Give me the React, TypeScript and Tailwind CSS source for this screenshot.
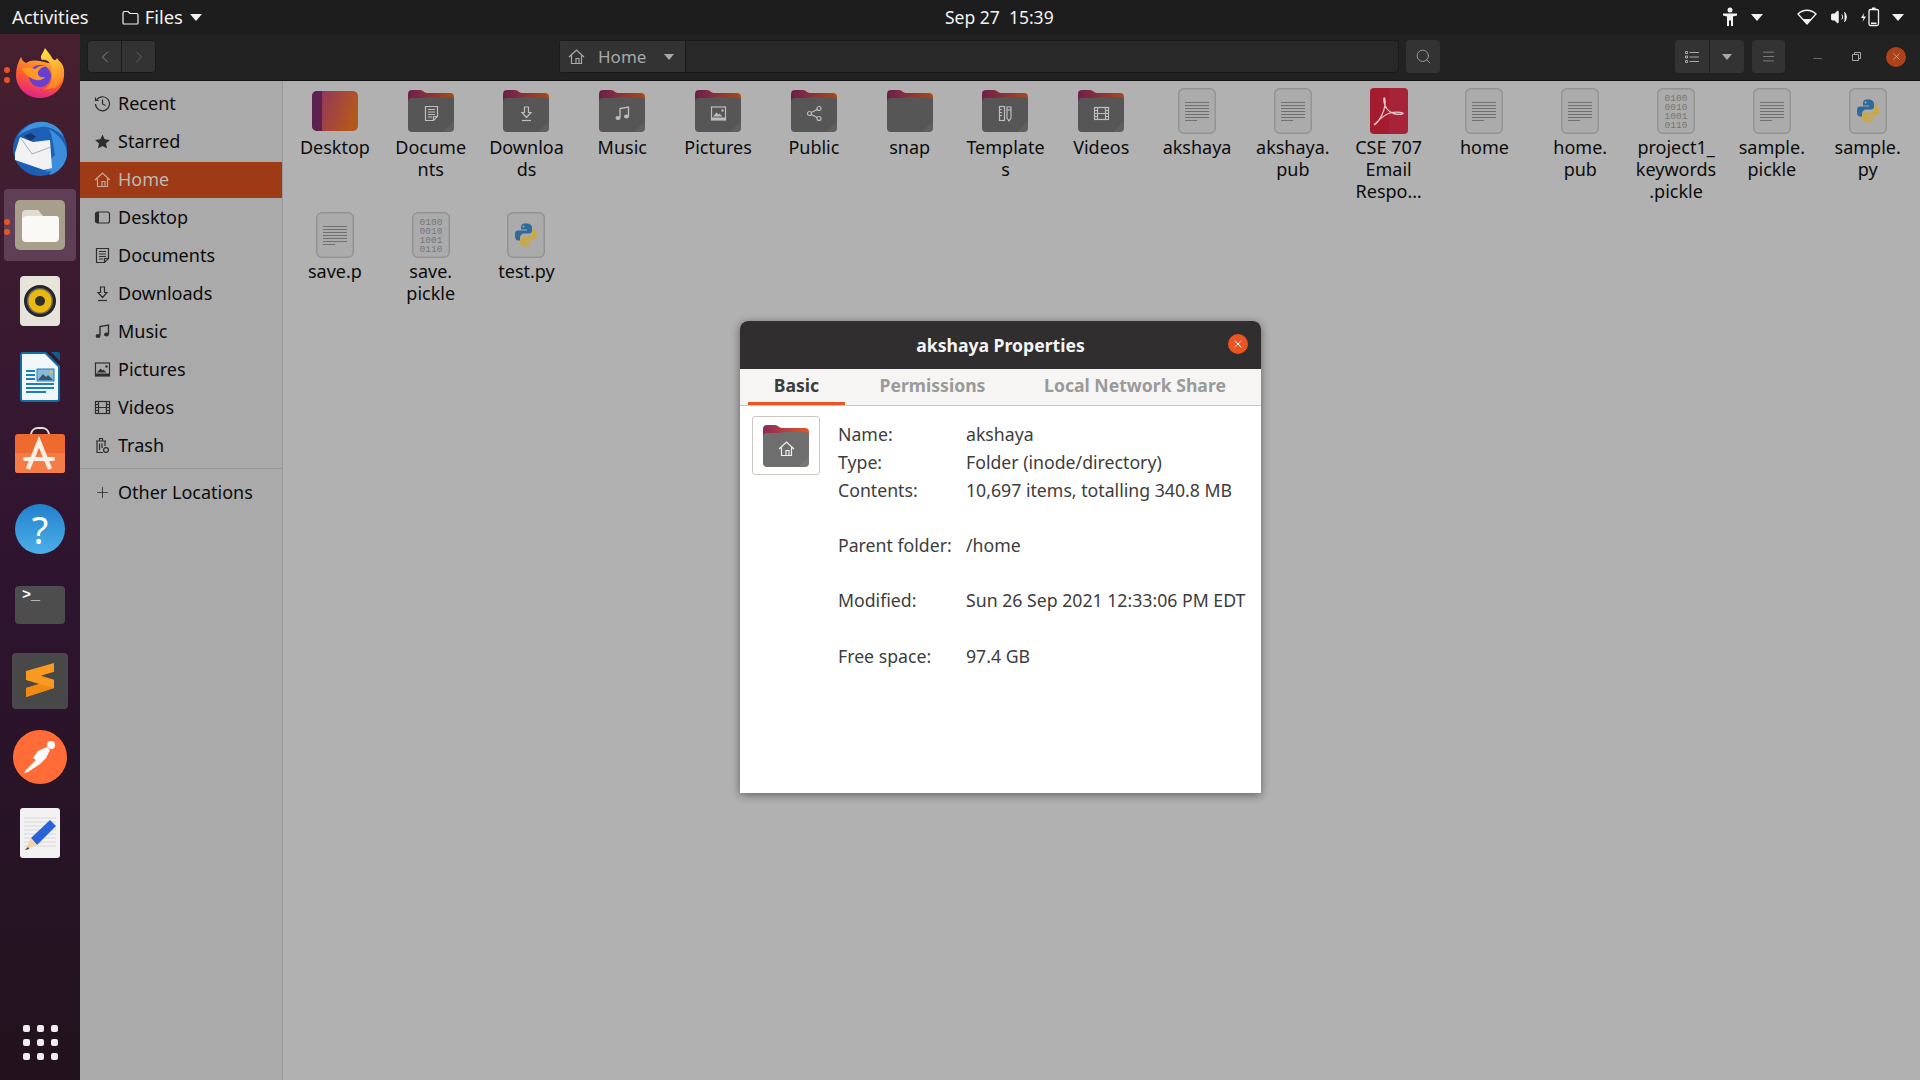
import React from "react";
import { ChevronLeft, ChevronRight, Search, Menu, X, Volume2, Minus, Plus } from "lucide-react";

const sidebarItems = [
  { icon: "recent", label: "Recent" },
  { icon: "star", label: "Starred" },
  { icon: "home", label: "Home", active: true },
  { icon: "desktop", label: "Desktop" },
  { icon: "document", label: "Documents" },
  { icon: "download", label: "Downloads" },
  { icon: "music", label: "Music" },
  { icon: "pictures", label: "Pictures" },
  { icon: "videos", label: "Videos" },
  { icon: "trash", label: "Trash" },
];

const files = [
  { kind: "desktop", lines: ["Desktop"] },
  { kind: "folder", glyph: "document", lines: ["Docume", "nts"] },
  { kind: "folder", glyph: "download", lines: ["Downloa", "ds"] },
  { kind: "folder", glyph: "music", lines: ["Music"] },
  { kind: "folder", glyph: "pictures", lines: ["Pictures"] },
  { kind: "folder", glyph: "share", lines: ["Public"] },
  { kind: "folder", glyph: "", lines: ["snap"] },
  { kind: "folder", glyph: "templates", lines: ["Template", "s"] },
  { kind: "folder", glyph: "videos", lines: ["Videos"] },
  { kind: "text", lines: ["akshaya"] },
  { kind: "text", lines: ["akshaya.", "pub"] },
  { kind: "pdf", lines: ["CSE 707", "Email", "Respo…"] },
  { kind: "text", lines: ["home"] },
  { kind: "text", lines: ["home.", "pub"] },
  { kind: "binary", lines: ["project1_", "keywords", ".pickle"] },
  { kind: "text", lines: ["sample.", "pickle"] },
  { kind: "python", lines: ["sample.", "py"] },
  { kind: "text", lines: ["save.p"] },
  { kind: "binary", lines: ["save.", "pickle"] },
  { kind: "python", lines: ["test.py"] },
];

function Glyph({ name, color = "#2e2e2e" }: { name: string; color?: string }) {
  const s = { fill: "none", stroke: color, strokeWidth: 1.2 };
  switch (name) {
    case "recent":
      return (
        <g {...s}>
          <path d="M2.6 5A7 7 0 1 1 1.5 9" />
          <path d="M1.5 2.5V5.5H4.5M8.5 4.5V9L11.5 10.5" />
        </g>
      );
    case "star":
      return <path d="M8.5 1.5l2.2 4.8 5.2.6-3.9 3.5 1.1 5.1-4.6-2.6-4.6 2.6 1.1-5.1L1.1 6.9l5.2-.6z" fill={color} />;
    case "home":
      return (
        <g {...s}>
          <path d="M1 9L8.5 2L16 9M3.5 7.5V15.5H13.5V7.5M8 15.5V10.5H11V15.5" />
        </g>
      );
    case "desktop":
      return (
        <g>
          <rect x="1.5" y="3" width="14" height="11" rx="2" {...s} />
          <path d="M1.5 5a2 2 0 0 1 2-2H5v11H3.5a2 2 0 0 1-2-2z" fill={color} />
        </g>
      );
    case "document":
      return (
        <g {...s}>
          <path d="M2.5 1.5H14.5V11.5L10.5 15.5H2.5Z" />
          <path d="M5 4.5H12M5 7H12M5 9.5H12M5 12H9M10.5 15.5V11.5H14.5" />
        </g>
      );
    case "download":
      return (
        <g {...s}>
          <path d="M6.5 2H10.5V7.5H13L8.5 12.5L4 7.5H6.5Z" />
          <path d="M4 15.5H13" />
        </g>
      );
    case "music":
      return (
        <g>
          <path d="M6 12.5V3.5L14.5 2V11" fill="none" stroke={color} strokeWidth="1.4" />
          <ellipse cx="4" cy="13" rx="2.5" ry="2" fill={color} />
          <ellipse cx="12.5" cy="11.5" rx="2.5" ry="2" fill={color} />
        </g>
      );
    case "pictures":
      return (
        <g>
          <rect x="1.5" y="2" width="14" height="13" fill="none" stroke={color} strokeWidth="1.2" />
          <path d="M1.5 12.5h14V15h-14zM3 11.5l3.5-4 2 2 1-1 3 3z" fill={color} />
          <circle cx="12.5" cy="5.5" r="1.2" fill={color} />
        </g>
      );
    case "videos":
      return (
        <g {...s}>
          <rect x="1.5" y="2.5" width="14" height="12" />
          <path d="M4.5 2.5V14.5M12.5 2.5V14.5M1.5 5.5H4.5M1.5 8.5H4.5M1.5 11.5H4.5M12.5 5.5H15.5M12.5 8.5H15.5M12.5 11.5H15.5M4.5 8.5H12.5" />
        </g>
      );
    case "trash":
      return (
        <g {...s}>
          <path d="M2 4H12M5.5 4V1.5H8.5V4M3 4V15.5H9M11 4V9M5.5 6.5V13M8 6.5V11" />
          <circle cx="12" cy="13" r="2.4" />
        </g>
      );
    case "share":
      return (
        <g {...s}>
          <circle cx="3.5" cy="8.5" r="2" />
          <circle cx="13" cy="3.5" r="2" />
          <circle cx="13" cy="13.5" r="2" />
          <path d="M5.3 7.5L11.2 4.5M5.3 9.5L11.2 12.5" />
        </g>
      );
    case "templates":
      return (
        <g {...s}>
          <rect x="2.5" y="1.5" width="5" height="14" />
          <path d="M2.5 4.5H5M2.5 7.5H5M2.5 10.5H5M10 2H14V13L12 16L10 13Z" />
          <path d="M10 5H14" />
        </g>
      );
    default:
      return null;
  }
}

function FolderIcon({ glyph, dim = true }: { glyph: string; dim?: boolean }) {
  const id = dim ? "folderDim" : "folderBright";
  const from = dim ? "#6d1f4c" : "#8a2a5e";
  const to = dim ? "#a84a1c" : "#e95420";
  const front = dim ? "#565656" : "#6e6e6e";
  return (
    <svg width="46" height="42" viewBox="0 0 46 42">
      <defs>
        <linearGradient id={id} x1="0" x2="1" y1="0" y2="0">
          <stop offset="0" stopColor={from} />
          <stop offset="1" stopColor={to} />
        </linearGradient>
      </defs>
      <path d="M0 20V4a4 4 0 0 1 4-4h8c3 0 4 3 7 3h23a4 4 0 0 1 4 4v13z" fill={`url(#${id})`} />
      <path d="M0 12a4 4 0 0 1 4-4h11c3 0 4-1 6-1h21a4 4 0 0 1 4 4v27a4 4 0 0 1-4 4H4a4 4 0 0 1-4-4z" fill={front} />
      <path d="M46 31v7a4 4 0 0 1-4 4h-7z" fill="#ffffff" opacity="0.06" />
      <g transform="translate(15 15)">
        <Glyph name={glyph} color={dim ? "#bdbdbd" : "#efefef"} />
      </g>
    </svg>
  );
}

function PageFrame({ children }: { children?: React.ReactNode }) {
  return (
    <svg width="38" height="46" viewBox="0 0 38 46">
      <rect x="0.75" y="0.75" width="36.5" height="44.5" rx="5" fill="#ababab" stroke="#939393" strokeWidth="1.5" />
      {children}
    </svg>
  );
}

function TextFileIcon() {
  return (
    <PageFrame>
      <path
        d="M7 14.5H31M7 17.5H31M7 20.5H31M7 23.5H31M7 26.5H31M7 29.5H31M7 32.5H19"
        stroke="#707070"
        strokeWidth="1"
      />
    </PageFrame>
  );
}

function BinaryFileIcon() {
  return (
    <PageFrame>
      <g fontFamily="Liberation Mono, monospace" fontSize="9.5" fill="#777777" textAnchor="middle">
        <text x="19" y="13">0100</text>
        <text x="19" y="22">0010</text>
        <text x="19" y="31">1001</text>
        <text x="19" y="40">0110</text>
      </g>
    </PageFrame>
  );
}

function PythonIcon() {
  return (
    <PageFrame>
      <g transform="translate(8 11.5)">
        <path d="M11 0C6 0 6 2 6 5v1h6v1H3C0 7 0 10 0 12s.5 5 3 5h2v-3c0-2 2-4 4-4h5c2 0 3-1 3-3V4c0-2-2-4-6-4z" fill="#2f6a9c" />
        <circle cx="8.5" cy="3" r="1" fill="#ababab" />
        <path d="M11 23c5 0 5-2 5-5v-1h-6v-1h9c3 0 3-3 3-5s-.5-5-3-5h-2v3c0 2-2 4-4 4H8c-2 0-3 1-3 3v3c0 2 2 4 6 4z" fill="#c7a94c" />
        <circle cx="13.5" cy="20" r="1" fill="#ababab" />
      </g>
    </PageFrame>
  );
}

function PdfIcon() {
  return (
    <svg width="38" height="46" viewBox="0 0 38 46">
      <rect width="38" height="46" rx="4" fill="#a41c30" />
      <rect x="19" width="19" height="46" rx="4" fill="#ffffff" opacity="0.04" />
      <path
        d="M4 37c5-3 10-12 11-20 .5-5-.5-8-1-7s-.5 6 3 11 11 6 15 5-5-3-12-1-12 8-16 12z"
        fill="none"
        stroke="#e9c4c9"
        strokeWidth="1.3"
      />
    </svg>
  );
}

function DesktopFolderIcon() {
  return (
    <svg width="46" height="40" viewBox="0 0 46 40">
      <defs>
        <linearGradient id="deskGrad" x1="0" x2="1" y1="0" y2="0.3">
          <stop offset="0" stopColor="#8b3168" />
          <stop offset="1" stopColor="#b4561f" />
        </linearGradient>
      </defs>
      <rect width="46" height="40" rx="5" fill="url(#deskGrad)" />
      <path d="M5 0h5v40H5a5 5 0 0 1-5-5V5a5 5 0 0 1 5-5z" fill="#5a2150" />
    </svg>
  );
}

function FileItem({ file }: { file: (typeof files)[number] }) {
  return (
    <div className="flex flex-col items-center">
      <div className="flex h-[46px] w-[46px] items-center justify-center">
        {file.kind === "folder" && <FolderIcon glyph={file.glyph ?? ""} />}
        {file.kind === "desktop" && <DesktopFolderIcon />}
        {file.kind === "text" && <TextFileIcon />}
        {file.kind === "binary" && <BinaryFileIcon />}
        {file.kind === "python" && <PythonIcon />}
        {file.kind === "pdf" && <PdfIcon />}
      </div>
      <div className="mt-[2px] text-center text-[18px] leading-[22px] text-[#0c0c0c]">
        {file.lines.map((line) => (
          <div key={line}>{line}</div>
        ))}
      </div>
    </div>
  );
}

function DockItem({ children, dots, active }: { children: React.ReactNode; dots?: boolean; active?: boolean }) {
  return (
    <div className="relative flex h-[76px] w-[80px] items-center justify-center">
      {active && <div className="absolute left-[4px] top-[2px] h-[72px] w-[72px] rounded-[4px] bg-[#5f3f55]" />}
      {dots && (
        <div className="absolute left-[4px] top-[32px] flex flex-col gap-[4px]">
          <div className="h-[6px] w-[6px] rounded-full bg-[#e95420]" />
          <div className="h-[6px] w-[6px] rounded-full bg-[#e95420]" />
        </div>
      )}
      <div className="relative flex">{children}</div>
    </div>
  );
}

function Dock() {
  return (
    <aside className="flex w-[80px] shrink-0 flex-col bg-linear-to-b from-[#47202f] via-[#2f1430] to-[#21121d] pt-px">
      <DockItem dots>
        <svg width="50" height="50" viewBox="0 0 50 50">
          <defs>
            <linearGradient id="ffBody" x1="0.7" x2="0.35" y1="0" y2="1">
              <stop offset="0" stopColor="#ffb52e" />
              <stop offset="0.55" stopColor="#ff5a2e" />
              <stop offset="1" stopColor="#e0208c" />
            </linearGradient>
            <linearGradient id="ffFlame" x1="0.4" x2="0.7" y1="0" y2="1">
              <stop offset="0" stopColor="#ffe14a" />
              <stop offset="1" stopColor="#ff7a1f" />
            </linearGradient>
          </defs>
          <path d="M1 27C1 20 3 14 6 9c1 3 2 5 5 6 4-3 9-3 14-2 8 2 24 4 24 14 0 13-11 23-24 23S1 40 1 27z" fill="url(#ffBody)" />
          <path d="M30 0c-2 6-6 8-3 12 8-2 11 8 10 16 0 10-7 14-13 14l16-2c6-5 10-10 9-18-1-8-5-8-7-12-2 4-4 2-6-2-2-3-4-5-6-8z" fill="url(#ffFlame)" />
          <circle cx="25" cy="28" r="11" fill="#6a3fd0" />
          <path d="M7 21c5-2 9-1 13 0 3-3 8-4 11-3-4 1-7 3-8 6-1 4 3 6 7 5-3 4-9 4-14 1-4-2-7-5-9-9z" fill="#ff9a26" />
        </svg>
      </DockItem>
      <DockItem>
        <svg width="56" height="56" viewBox="0 0 56 56">
          <circle cx="28" cy="28" r="27" fill="#1c5fb4" />
          <path d="M5 16C12 6 22-1 32 1c10 1 17 7 20 15-7-7-15-11-23-10C20 7 12 10 5 16z" fill="#3f93dd" />
          <path d="M37 8c11 6 18 16 18 26-1 8-6 15-14 19l-4 1 2-4-6 1 3-3-5-2 12-12c-2-9-2-18-6-26z" fill="#3a8edb" />
          <path d="M12 15l7-3 5 4-6 4z" fill="#16386d" />
          <path d="M3 32L8 16L21 21L38 19L40 47L32 49L3 39Z" fill="#f2f2f4" />
          <path d="M8 16L20 33L39 26" fill="none" stroke="#a6adb8" strokeWidth="1" />
        </svg>
      </DockItem>
      <DockItem dots active>
        <svg width="50" height="50" viewBox="0 0 50 50">
          <rect width="50" height="50" rx="5" fill="#a79f8c" />
          <path d="M7 16a4 4 0 0 1 4-4h10l5 4h15a3 3 0 0 1 3 3v19a4 4 0 0 1-4 4H11a4 4 0 0 1-4-4z" fill="#faf9f6" />
          <path d="M7 18v-4a4 4 0 0 1 4-4h12l5 6H11z" fill="#e0dcd1" />
        </svg>
      </DockItem>
      <DockItem>
        <svg width="40" height="50" viewBox="0 0 40 50">
          <rect width="40" height="50" rx="4" fill="#e6e3da" />
          <circle cx="20" cy="25" r="16" fill="#262626" />
          <circle cx="20" cy="25" r="13" fill="#6d6a60" />
          <circle cx="20" cy="25" r="11.5" fill="#eab910" />
          <circle cx="20" cy="25" r="5" fill="#2e2e2e" />
        </svg>
      </DockItem>
      <DockItem>
        <svg width="40" height="50" viewBox="0 0 40 50">
          <path d="M3 0h23l14 14v33a3 3 0 0 1-3 3H3a3 3 0 0 1-3-3V3a3 3 0 0 1 3-3z" fill="#0f6fa6" />
          <path d="M3 2h22l13 13v32a1 1 0 0 1-1 1H3a1 1 0 0 1-1-1V3a1 1 0 0 1 1-1z" fill="#f2f6f9" />
          <path d="M31 0h7a2 2 0 0 1 2 2v7z" fill="#0f5f8e" />
          <path d="M6 18h9v2H6zM6 22h9v2H6zM6 26h9v2H6zM6 31h28v2H6zM6 35h28v2H6zM6 39h20v2H6z" fill="#1a7fc0" />
          <rect x="17" y="17" width="17" height="12" fill="#8ab8d8" stroke="#1a7fc0" />
          <path d="M18 28l5-6 3 3 2-2 5 5z" fill="#39556b" />
          <circle cx="31" cy="20" r="1.5" fill="#f0c040" />
        </svg>
      </DockItem>
      <DockItem>
        <svg className="-mt-[6px]" width="50" height="46" viewBox="0 0 50 46">
          <path d="M16 9V7a7 7 0 0 1 7-6h4a7 7 0 0 1 7 6v2" fill="none" stroke="#e9dfc9" strokeWidth="2" />
          <rect y="7" width="50" height="39" rx="3" fill="#ef6a2f" />
          <path d="M0 26h50v17a3 3 0 0 1-3 3H3a3 3 0 0 1-3-3z" fill="#f47c47" />
          <path d="M13 42L24 15L35 42" fill="none" stroke="#fdeee6" strokeWidth="4.5" />
          <path d="M10 32H38" fill="none" stroke="#fdeee6" strokeWidth="4" strokeLinecap="round" />
        </svg>
      </DockItem>
      <DockItem>
        <div className="flex h-[50px] w-[50px] items-center justify-center rounded-full bg-linear-to-b from-[#2280cc] to-[#4cb0e8] text-[38px] leading-none text-white">
          ?
        </div>
      </DockItem>
      <DockItem>
        <div className="h-[38px] w-[50px] rounded-[4px] bg-[#4d4d4d] pl-[7px] pt-px font-['Liberation_Mono',monospace] text-[15px] font-bold leading-[17px] text-white">
          {">_"}
        </div>
      </DockItem>
      <DockItem>
        <svg width="56" height="56" viewBox="0 0 56 56">
          <rect width="56" height="56" rx="4" fill="#484848" />
          <path d="M14 18L42 10V18.7L28.7 22.7L42 26.7V35L14 44V35L27.3 31L14 27Z" fill="#f79a1e" />
          <path d="M14 35L27.3 31L42 35L14 44Z" fill="#ef8a12" />
        </svg>
      </DockItem>
      <DockItem>
        <svg width="54" height="54" viewBox="0 0 54 54">
          <circle cx="27" cy="27" r="27" fill="#ff6c37" />
          <circle cx="38" cy="15" r="4" fill="#fff" />
          <path d="M34 17L25 21L20 28L23 30L13 40L11 43L15 42L27 34L33 28L37 20Z" fill="#fff" />
        </svg>
      </DockItem>
      <DockItem>
        <svg width="40" height="50" viewBox="0 0 40 50">
          <rect width="40" height="50" rx="3" fill="#f2f2f2" />
          <path d="M4 10H36M4 14H36M4 18H36M4 22H36M4 26H36M4 30H36M4 34H36M4 38H36" stroke="#d8d8d8" strokeWidth="1" />
          <path d="M11 30L30 12L36 18L17 37Z" fill="#2a62d8" />
          <path d="M11 30L17 37L5 42Z" fill="#f6d3ad" />
          <path d="M8 39L5 42L9 41Z" fill="#333" />
        </svg>
      </DockItem>
      <div className="mt-auto mb-[20px] grid grid-cols-[7px_7px_7px] gap-[7px] self-center">
        {Array.from({ length: 9 }).map((_, i) => (
          <div key={i} className="h-[7px] w-[7px] rounded-[2px] bg-[#eeeeee]" />
        ))}
      </div>
    </aside>
  );
}

function Sidebar() {
  return (
    <nav className="w-[203px] shrink-0 border-r border-[#999999] bg-[#aaaaaa] pt-[5px] text-[18px] text-[#0c0c0c]">
      <div className="flex flex-col gap-[2px] pb-[4px]">
        {sidebarItems.map((item) => (
          <div
            key={item.label}
            className={
              item.active
                ? "flex h-[36px] items-center gap-[7px] bg-[#9e3a16] pb-[2px] pl-[14px] text-[#b9b9b9]"
                : "flex h-[36px] items-center gap-[7px] pb-[2px] pl-[14px]"
            }
          >
            <svg width="17" height="17" viewBox="0 0 17 17">
              <Glyph name={item.icon} color={item.active ? "#c4a79a" : "#2e2e2e"} />
            </svg>
            <span>{item.label}</span>
          </div>
        ))}
      </div>
      <div className="flex h-[50px] items-center gap-[7px] border-t border-[#999999] pb-[2px] pl-[14px]">
        <Plus size={17} strokeWidth={1.2} color="#2e2e2e" />
        <span>Other Locations</span>
      </div>
    </nav>
  );
}

function TopBar() {
  return (
    <header className="relative flex h-[34px] shrink-0 items-center bg-[#1d1d1d] pl-[12px] text-[18.4px] text-[#f2f2f2]">
      <span>Activities</span>
      <svg className="ml-[33px]" width="17" height="15" viewBox="0 0 17 15">
        <path d="M1 3a1.5 1.5 0 0 1 1.5-1.5H6L8 3.5h6.5A1.5 1.5 0 0 1 16 5v8a1 1 0 0 1-1 1H2a1 1 0 0 1-1-1z" fill="none" stroke="#f2f2f2" strokeWidth="1.2" />
      </svg>
      <span className="ml-[6px]">Files</span>
      <div className="ml-[7px] h-0 w-0 border-x-[6px] border-t-[7px] border-x-transparent border-t-[#f2f2f2]" />
      <span className="absolute left-[945px] whitespace-pre text-[17.5px]">{"Sep 27  15:39"}</span>
      <div className="ml-auto flex items-center pr-[16px]">
        <svg width="18" height="20" viewBox="0 0 18 20">
          <circle cx="9" cy="3" r="2.5" fill="#f2f2f2" />
          <path d="M2 6.5H16V8.5L12 9.5V19H10V13.5H8V19H6V9.5L2 8.5Z" fill="#f2f2f2" />
        </svg>
        <div className="ml-[12px] h-0 w-0 border-x-[6px] border-t-[7px] border-x-transparent border-t-[#f2f2f2]" />
        <svg className="ml-[34px]" width="20" height="16" viewBox="0 0 20 16">
          <path d="M1 5C6 0 14 0 19 5L10 15Z" fill="none" stroke="#f2f2f2" strokeWidth="1.3" />
          <path d="M5.5 10H14.5L10 15Z" fill="#f2f2f2" />
        </svg>
        <Volume2 className="ml-[13px]" size={18} color="#f2f2f2" fill="#f2f2f2" strokeWidth={1.2} />
        <svg className="ml-[12px]" width="20" height="20" viewBox="0 0 20 20">
          <path d="M4 6L1 11H3.5L2.5 15L6 9.5H3.5Z" fill="#f2f2f2" />
          <rect x="9" y="2.5" width="9.5" height="16" rx="1.5" fill="none" stroke="#f2f2f2" strokeWidth="1.3" />
          <rect x="12" y="0.5" width="3.5" height="2" fill="#f2f2f2" />
          <rect x="11" y="15.5" width="5.5" height="1.5" fill="#f2f2f2" />
        </svg>
        <div className="ml-[12px] h-0 w-0 border-x-[6px] border-t-[7px] border-x-transparent border-t-[#f2f2f2]" />
      </div>
    </header>
  );
}

function Toolbar() {
  return (
    <div className="flex h-[47px] shrink-0 items-center border-b border-[#111111] bg-[#222222] pb-px pl-[7px] text-[#a8a8a8]">
      <div className="flex h-[33px] w-[69px] rounded-[4px] border border-[#1a1a1a] bg-[#333333]">
        <div className="flex flex-1 items-center justify-center border-r border-[#1a1a1a]">
          <ChevronLeft size={20} strokeWidth={1} color="#9a9a9a" />
        </div>
        <div className="flex flex-1 items-center justify-center">
          <ChevronRight size={20} strokeWidth={1} color="#6a6a6a" />
        </div>
      </div>
      <div className="ml-[403px] flex h-[33px] w-[840px] rounded-[4px] border border-[#1a1a1a] bg-[#282828]">
        <div className="flex w-[126px] items-center border-r border-[#1a1a1a] bg-[#333333] pl-[8px] text-[17px]">
          <svg width="17" height="17" viewBox="0 0 17 17">
            <Glyph name="home" color="#a8a8a8" />
          </svg>
          <span className="ml-[13px]">Home</span>
          <div className="ml-[18px] h-0 w-0 border-x-[5px] border-t-[6px] border-x-transparent border-t-[#a8a8a8]" />
        </div>
      </div>
      <div className="ml-[7px] flex h-[33px] w-[34px] items-center justify-center rounded-[4px] bg-[#333333]">
        <Search size={17} strokeWidth={1.2} color="#a8a8a8" />
      </div>
      <div className="ml-[235px] flex h-[33px] w-[69px] rounded-[4px] bg-[#333333]">
        <div className="flex w-[35px] items-center justify-center border-r border-[#1f1f1f]">
          <svg width="14" height="12" viewBox="0 0 14 12">
            <path d="M4.5 1.5H14M4.5 6H14M4.5 10.5H14" stroke="#a8a8a8" strokeWidth="1" />
            <path d="M.5.5h2v2h-2zM.5 5h2v2h-2zM.5 9.5h2v2h-2z" fill="none" stroke="#a8a8a8" strokeWidth="1" />
          </svg>
        </div>
        <div className="flex flex-1 items-center justify-center">
          <div className="h-0 w-0 border-x-[5px] border-t-[6px] border-x-transparent border-t-[#a8a8a8]" />
        </div>
      </div>
      <div className="ml-[8px] flex h-[33px] w-[33px] items-center justify-center rounded-[4px] bg-[#333333]">
        <Menu size={15} strokeWidth={1} color="#a8a8a8" />
      </div>
      <Minus className="ml-[26px] mt-[4px]" size={13} strokeWidth={1} color="#a8a8a8" />
      <svg className="ml-[28px]" width="9" height="9" viewBox="0 0 9 9">
        <path d="M.5 2.5h6v6h-6zM2.5 2.5v-2h6v6h-2" fill="none" stroke="#a8a8a8" strokeWidth="1" />
      </svg>
      <div className="ml-[25px] flex h-[20px] w-[20px] items-center justify-center rounded-full bg-[#b0421a]">
        <X size={11} strokeWidth={1.4} color="#e0c0b0" />
      </div>
    </div>
  );
}

function PropRow({ label, value }: { label: string; value: string }) {
  return (
    <div className="flex h-[28px] items-center">
      <span className="w-[128px] shrink-0">{label}</span>
      <span>{value}</span>
    </div>
  );
}

function PropertiesDialog() {
  return (
    <div className="absolute left-[740px] top-[321px] flex h-[472px] w-[521px] flex-col overflow-hidden rounded-t-[8px] bg-white shadow-[0_2px_10px_rgba(0,0,0,0.45)]">
      <div className="relative flex h-[48px] shrink-0 items-center justify-center bg-[#302e2f] text-[17.6px] font-bold text-[#f4f4f4]">
        akshaya Properties
        <div className="absolute right-[13px] top-[13px] flex h-[20px] w-[20px] items-center justify-center rounded-full bg-[#e95420]">
          <X size={12} strokeWidth={2} color="#ffffff" />
        </div>
      </div>
      <div className="flex h-[37px] shrink-0 border-b border-[#cdc7c2] bg-[#f6f5f4] pl-[8px] text-[17.6px] font-bold text-[#9a9a9a]">
        <div className="flex w-[97px] items-center justify-center border-b-[3px] border-[#e95420] text-[#3d3d3d]">Basic</div>
        <div className="flex w-[175px] items-center justify-center pb-[3px]">Permissions</div>
        <div className="flex w-[230px] items-center justify-center pb-[3px]">Local Network Share</div>
      </div>
      <div className="flex pl-[12px] pt-[14px] text-[17.7px] text-[#3d3d3d]">
        <div className="-mt-[4px] flex h-[59px] w-[68px] shrink-0 items-center justify-center rounded-[3px] border border-[#cdc7c2]">
          <FolderIcon glyph="home" dim={false} />
        </div>
        <div className="ml-[18px] flex flex-col">
          <PropRow label="Name:" value="akshaya" />
          <PropRow label="Type:" value="Folder (inode/directory)" />
          <PropRow label="Contents:" value="10,697 items, totalling 340.8 MB" />
          <div className="mt-[27px]">
            <PropRow label="Parent folder:" value="/home" />
          </div>
          <div className="mt-[27px]">
            <PropRow label="Modified:" value="Sun 26 Sep 2021 12:33:06 PM EDT" />
          </div>
          <div className="mt-[28px]">
            <PropRow label="Free space:" value="97.4 GB" />
          </div>
        </div>
      </div>
    </div>
  );
}

export default function App() {
  return (
    <div className="relative flex h-[1080px] w-[1920px] flex-col overflow-hidden font-['Noto_Sans',sans-serif]">
      <TopBar />
      <div className="flex min-h-0 flex-1">
        <Dock />
        <div className="flex min-w-0 flex-1 flex-col">
          <Toolbar />
          <div className="flex min-h-0 flex-1 overflow-hidden">
            <Sidebar />
            <main className="flex-1 bg-[#b1b1b1] pl-[4px] pt-[7px]">
              <div className="grid grid-cols-[repeat(17,95.8px)] auto-rows-[124px]">
                {files.map((file) => (
                  <FileItem key={file.lines.join("")} file={file} />
                ))}
              </div>
            </main>
          </div>
        </div>
      </div>
      <PropertiesDialog />
    </div>
  );
}
